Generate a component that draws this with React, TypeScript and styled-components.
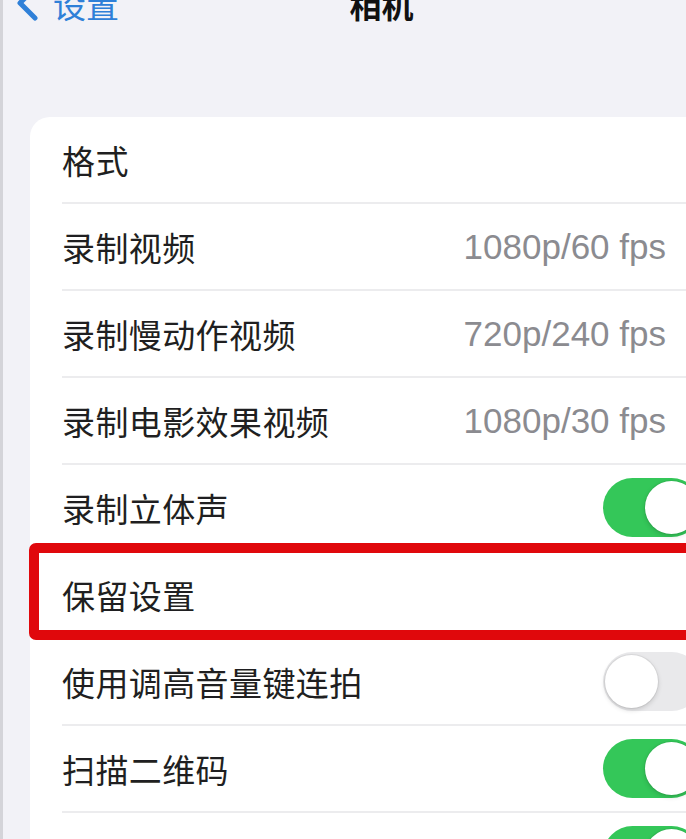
import React from 'react';
import styled, { createGlobalStyle } from 'styled-components';

const GlobalStyle = createGlobalStyle`
  html, body {
    margin: 0;
    padding: 0;
    background: #f2f2f7;
    overflow: hidden;
  }
  body {
    font-family: "Noto Sans CJK SC", "Noto Sans", sans-serif;
    -webkit-font-smoothing: antialiased;
  }
`;

const Page = styled.div`
  height: 839px;
  overflow: hidden;
  border-left: 3px solid #d4d4d9;
  box-sizing: border-box;
`;

const Screen = styled.div`
  width: 759px;
`;

const NavBar = styled.div`
  display: grid;
  grid-template-columns: 1fr auto 1fr;
  align-items: center;
  height: 44px;
  margin-top: -18px;
`;

const BackLink = styled.div`
  display: flex;
  align-items: center;
  gap: 14px;
  padding-left: 12px;
  color: #2f80d8;
  font-size: 33px;
  line-height: 1;
`;

const Title = styled.div`
  font-size: 32px;
  font-weight: 700;
  color: #111;
  line-height: 1;
  margin-left: -2px;
`;

const Card = styled.div`
  margin: 91px 30px 0 27px;
  background: #fff;
  border-radius: 20px 20px 0 0;
`;

const Row = styled.div`
  position: relative;
  display: flex;
  align-items: center;
  height: 85px;
  padding: 0 28px 0 32px;
`;

const Divider = styled.div`
  height: 2px;
  margin-left: 32px;
  background: #ececee;
`;

const Label = styled.span`
  flex: 1;
  font-size: 33px;
  color: #1f1f21;
  letter-spacing: 0.4px;
`;

const Value = styled.span`
  font-family: "Liberation Sans", "Noto Sans CJK SC", sans-serif;
  font-size: 35px;
  color: #8b8b90;
`;

const Disclosure = styled.svg`
  margin-left: 24px;
  width: 14px;
  height: 24px;
`;

const Track = styled.div<{ $on: boolean }>`
  position: relative;
  width: 98px;
  height: 59px;
  margin-right: 3px;
  border-radius: 30px;
  background: ${(p) => (p.$on ? '#34c759' : '#e9e9eb')};
`;

const Knob = styled.div<{ $on: boolean }>`
  position: absolute;
  top: 3px;
  left: ${(p) => (p.$on ? '42px' : '2px')};
  width: 53px;
  height: 53px;
  border-radius: 50%;
  background: #fff;
  box-shadow: 0 2px 5px rgba(0, 0, 0, 0.16), 0 0 0 1px rgba(0, 0, 0, 0.05);
`;

const HighlightBox = styled.div`
  position: absolute;
  top: -9px;
  bottom: -3px;
  left: -1px;
  right: -30px;
  border: 10px solid #e0080c;
  border-radius: 7px;
  pointer-events: none;
`;

function Toggle({ on }: { on: boolean }) {
  return (
    <Track $on={on}>
      <Knob $on={on} />
    </Track>
  );
}

type Item = {
  label: string;
  value?: string;
  toggle?: boolean;
  highlight?: boolean;
};

const items: Item[] = [
  { label: '格式' },
  { label: '录制视频', value: '1080p/60 fps' },
  { label: '录制慢动作视频', value: '720p/240 fps' },
  { label: '录制电影效果视频', value: '1080p/30 fps' },
  { label: '录制立体声', toggle: true },
  { label: '保留设置', highlight: true },
  { label: '使用调高音量键连拍', toggle: false },
  { label: '扫描二维码', toggle: true },
  { label: '显示检测到的文本', toggle: true },
];

export default function App() {
  return (
    <>
      <GlobalStyle />
      <Page>
        <Screen>
          <NavBar>
            <BackLink>
              <svg width="24" height="36" viewBox="0 0 24 36">
                <path
                  d="M20 2 L5 17 L20 32"
                  fill="none"
                  stroke="#2f80d8"
                  strokeWidth="5"
                  strokeLinecap="round"
                  strokeLinejoin="round"
                />
              </svg>
              <span>设置</span>
            </BackLink>
            <Title>相机</Title>
            <div />
          </NavBar>
          <Card>
            {items.map((item, i) => (
              <React.Fragment key={item.label}>
                {i > 0 && <Divider />}
                <Row>
                  <Label>{item.label}</Label>
                  {item.value && (
                    <>
                      <Value>{item.value}</Value>
                      <Disclosure viewBox="0 0 14 24">
                        <path
                          d="M2 2 L12 12 L2 22"
                          fill="none"
                          stroke="#c4c4c7"
                          strokeWidth="3"
                        />
                      </Disclosure>
                    </>
                  )}
                  {item.toggle !== undefined && <Toggle on={item.toggle} />}
                  {item.highlight && <HighlightBox />}
                </Row>
              </React.Fragment>
            ))}
          </Card>
        </Screen>
      </Page>
    </>
  );
}
